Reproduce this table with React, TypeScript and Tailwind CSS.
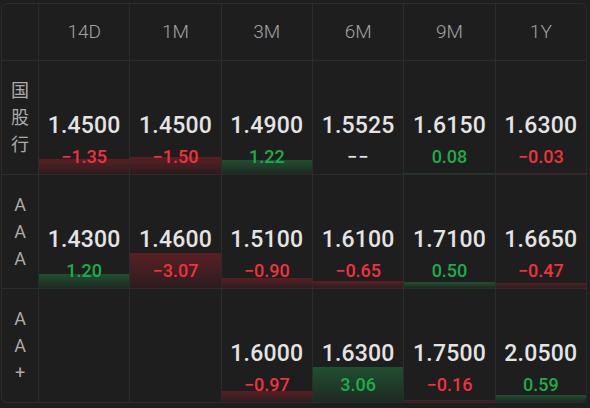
import React from "react";

type Quote = {
  price: string;
  change: number | null;
};

const tenors = ["14D", "1M", "3M", "6M", "9M", "1Y"];

const rows: { label: string[]; quotes: (Quote | null)[] }[] = [
  {
    label: ["国", "股", "行"],
    quotes: [
      { price: "1.4500", change: -1.35 },
      { price: "1.4500", change: -1.5 },
      { price: "1.4900", change: 1.22 },
      { price: "1.5525", change: null },
      { price: "1.6150", change: 0.08 },
      { price: "1.6300", change: -0.03 },
    ],
  },
  {
    label: ["A", "A", "A"],
    quotes: [
      { price: "1.4300", change: 1.2 },
      { price: "1.4600", change: -3.07 },
      { price: "1.5100", change: -0.9 },
      { price: "1.6100", change: -0.65 },
      { price: "1.7100", change: 0.5 },
      { price: "1.6650", change: -0.47 },
    ],
  },
  {
    label: ["A", "A", "+"],
    quotes: [
      null,
      null,
      { price: "1.6000", change: -0.97 },
      { price: "1.6300", change: 3.06 },
      { price: "1.7500", change: -0.16 },
      { price: "2.0500", change: 0.59 },
    ],
  },
];

const fmt = (v: number) => (v < 0 ? "\u2212" + Math.abs(v).toFixed(2) : v.toFixed(2));

const QuoteCell = ({ quote }: { quote: Quote | null }) => {
  if (!quote) return <div className="border-l border-t border-[#2c2c2c]" />;
  const { price, change } = quote;
  const up = change !== null && change > 0;
  const barHeight = change === null ? 0 : Math.max(1, Math.abs(change) * 11.4);
  return (
    <div className="relative border-l border-t border-[#2c2c2c] flex flex-col items-center justify-end pb-[7px]">
      {change !== null && (
        <div
          className={
            up
              ? "absolute left-0 right-0 bottom-0 bg-gradient-to-b from-[#1f5030] to-[#1d2a21]"
              : "absolute left-0 right-0 bottom-0 bg-gradient-to-b from-[#5a1e24] to-[#2b1c1e]"
          }
          style={{ height: barHeight }}
        />
      )}
      <span className="relative text-[23px] leading-[26px] font-medium text-[#e4e4e4] tracking-[0.2px]">
        {price}
      </span>
      <span
        className={
          "relative mt-2 text-[18px] leading-[20px] font-medium " +
          (change === null ? "text-[#e4e4e4] tracking-[1px]" : up ? "text-[#1aad4b]" : "text-[#f2313d]")
        }
      >
        {change === null ? "\u2212\u2212" : fmt(change)}
      </span>
    </div>
  );
};

export default function App() {
  return (
    <div
      className="w-[590px] h-[408px] bg-[#1e1e1e] pt-[3px] pl-px"
      style={{ fontFamily: "Roboto, 'Noto Sans CJK SC', sans-serif" }}
    >
      <div className="w-[586px] h-[400px] border border-[#2c2c2c] rounded-md grid grid-cols-[36px_repeat(6,1fr)] grid-rows-[56px_114px_114px_114px] overflow-hidden">
        <div />
        {tenors.map((t) => (
          <div
            key={t}
            className="border-l border-[#2c2c2c] flex items-center justify-center text-[19px] font-light text-[#a3a3a3]"
          >
            {t}
          </div>
        ))}
        {rows.map((row, i) => (
          <React.Fragment key={i}>
            <div className="border-t border-[#2c2c2c] flex flex-col items-center justify-center text-[18px] leading-[27px] text-[#ababab]">
              {row.label.map((c, j) => (
                <span key={j}>{c}</span>
              ))}
            </div>
            {row.quotes.map((q, j) => (
              <QuoteCell key={j} quote={q} />
            ))}
          </React.Fragment>
        ))}
      </div>
    </div>
  );
}
